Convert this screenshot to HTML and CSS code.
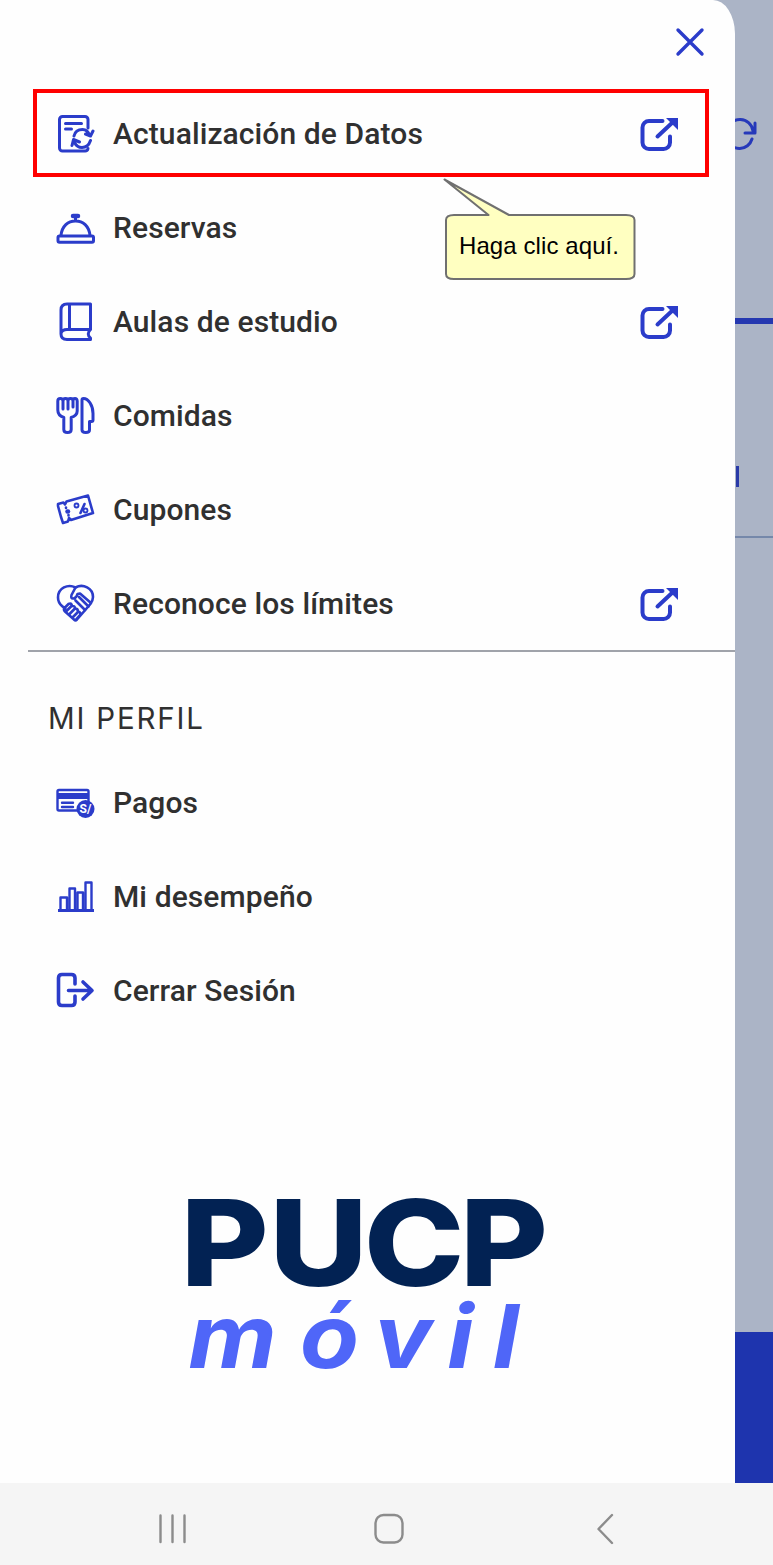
FILE: index.html
```html
<!DOCTYPE html>
<html lang="es">

<head>
    <meta charset="UTF-8">
    <meta name="viewport" content="width=device-width, initial-scale=1.0">
    <title>PUCP Móvil</title>
    <link rel="stylesheet" href="styles.css">
</head>

<body>
    <!-- Shared icon, used by the items that open an external site -->
    <svg class="sprite" aria-hidden="true">
        <symbol id="external" viewBox="0 0 40 40">
            <path d="M23.500 7H10a6.500 6.500 0 0 0-6.500 6.500v15a6.500 6.500 0 0 0 6.500 6.500h14.500a6.500 6.500 0 0 0 6.500-6.500V22.500M18.500 22.500L34 8" />
            <path class="solid" d="M27 4h12v12z" />
        </symbol>
    </svg>

    <div class="screen">
        <aside class="drawer">
            <header class="drawer-header">
                <svg class="close" viewBox="0 0 30 30"><path d="M3 3L27 27M27 3L3 27" /></svg>
            </header>

            <nav class="menu">
                <a class="menu-item highlighted">
                    <svg class="icon" viewBox="0 0 40 40">
                        <path d="M33 14V5.500a3 3 0 0 0-3-3H7.500a3 3 0 0 0-3 3v28.500a3 3 0 0 0 3 3h22.500a3 3 0 0 0 3-2.500M10.500 9.500h16M10.500 15h6" />
                        <path d="M19 22c1-4.500 4.500-6.500 8.500-6.500s6 2.500 7 6M30.500 20l5 2 2.500-5M35.500 26.500c-1.500 4.500-4.500 7-8.500 7-3.500 0-6-2-7.500-5M17 31.500l1.500-6 6 2.500" />
                    </svg>
                    <span class="label">Actualización de Datos</span>
                    <svg class="external"><use href="#external" /></svg>
                </a>
                <a class="menu-item">
                    <svg class="icon" viewBox="0 0 40 40">
                        <rect x="3" y="28" width="35.500" height="6.300" rx="1.500" />
                        <path d="M6 27.500C7 18 13 13 20.500 13S34 18 35 27.500M20.500 8v4" />
                        <path class="heavy" d="M18 8h5" />
                    </svg>
                    <span class="label">Reservas</span>
                </a>
                <a class="menu-item">
                    <svg class="icon" viewBox="0 0 40 40">
                        <path d="M35.500 27.500V2H12Q6 2 6 8v24q0 5.500 6 5.500h23.500v-1.500q-4.500-4 0-8.500H12q-5 0-6 4M14.500 2v25.500" />
                    </svg>
                    <span class="label">Aulas de estudio</span>
                    <svg class="external"><use href="#external" /></svg>
                </a>
                <a class="menu-item">
                    <svg class="icon" viewBox="0 0 40 40">
                        <path d="M2.800 14V5q0-2.500 2.500-2.500T8 5q0-2.500 2.500-2.500T13 5q0-2.500 2.500-2.500T18 5q0-2.500 2-2.500T22.200 5v10q0 4.500-6 6.500v12q0 3-3.700 3t-3.700-3v-12q-6-2-6-7.500zM8 5v8M13 5v8M18 5v6" />
                        <path d="M27 34V4q0-1.500 1.500-1.500c5 0 9.500 7 9.500 15V24q0 1.500-1.500 1.500h-2V34q0 2.500-3.700 2.500T27 34z" />
                    </svg>
                    <span class="label">Comidas</span>
                </a>
                <a class="menu-item">
                    <svg class="icon ticket" viewBox="0 0 40 40">
                        <path d="M3 14l5.500-1.500 1.500 2 1.500-3L33 5.500l5 17.500-22 7-2-2-1 3.500-5 1.500-2-6-3-11z" />
                        <path d="M11 17.500v.5M13.500 25v.5M29.500 14L25.500 23" />
                        <path class="heavy" d="M12.500 21.500h.5" />
                        <circle class="dot" cx="21.500" cy="15.500" r="2" />
                        <circle class="dot" cx="30.500" cy="20.500" r="2" />
                    </svg>
                    <span class="label">Cupones</span>
                </a>
                <a class="menu-item">
                    <svg class="icon ticket" viewBox="0 0 40 40">
                        <path d="M20.500 3.500C13-.5 3 4 3 13.500q0 5 4 8.500l3.500 3M20.500 3.500C28-.5 38 4 38 13q0 4-3 7.500L22 35.500q-1.500 1.500-3 0L10 27.500q-2-2 0-4l3.500-3.500q3-1.500 3.500 2 3-.5 3 2.500 3 0 3 3 3 .5 2 3.500l-4 4.500" />
                        <path d="M20.500 3.500l-4 7.500q-1 4 2 3.500 3-.5 4-4.500l2.500-.500L36 19M11.500 27l5-5M14.500 30l5-5M18 33l5-5M24 13l9.500 9.500M20.500 16.500l9.500 9.500" />
                    </svg>
                    <span class="label">Reconoce los límites</span>
                    <svg class="external"><use href="#external" /></svg>
                </a>
            </nav>

            <h2 class="section-title">MI PERFIL</h2>

            <nav class="menu">
                <a class="menu-item">
                    <svg class="icon" viewBox="0 0 40 40">
                        <rect class="thin" x="2.500" y="7" width="31" height="20.500" rx="1.500" />
                        <path class="solid" d="M2 10h32v6H2z" />
                        <path class="thin" d="M7 19.800h11M7 24h11" />
                        <circle class="coin" cx="30.500" cy="26" r="9" />
                        <text class="coin-text" x="30.500" y="30">S/</text>
                    </svg>
                    <span class="label">Pagos</span>
                </a>
                <a class="menu-item">
                    <svg class="icon thin" viewBox="0 0 40 40">
                        <path d="M5.500 33V20.500H12V33M14.500 33V11.500H20V33M22.500 33V15.500H28V33M30.500 33V5.500h6V33" />
                        <path class="axis" d="M3 33.500h36" />
                    </svg>
                    <span class="label">Mi desempeño</span>
                </a>
                <a class="menu-item">
                    <svg class="icon logout" viewBox="0 0 40 40">
                        <path d="M20 13V7q0-3.500-3.500-3.500H7Q3.500 3.500 3.500 7v24q0 3.500 3.500 3.500h9.500q3.500 0 3.500-3.500v-6M13.500 19.500H36M28 11l9 8.500-9 8.500" />
                    </svg>
                    <span class="label">Cerrar Sesión</span>
                </a>
            </nav>

            <svg class="logo" viewBox="0 0 400 200">
                <text class="logo-pucp" transform="scale(1.13 1)" y="106" x="9.400 87.800 171.500 256.500">PUCP</text>
                <text class="logo-movil" transform="scale(1.1 1)" y="188" x="16.500 118 185.500 252 293.500">móvil</text>
            </svg>
        </aside>

        <div class="backdrop">
            <svg class="refresh" viewBox="0 0 38 40">
                <path d="M-8 15A13.200 13.200 0 0 1 18 16M20 8v10H10M17 24A13.200 13.200 0 0 1-8 25" />
            </svg>
            <div class="tab-line"></div>
            <div class="tab-text"></div>
            <div class="divider"></div>
            <div class="bottom-bar"></div>
        </div>

        <footer class="system-nav">
            <svg viewBox="0 0 40 40"><path d="M4.500 6.500v26.500M16.500 6.500v26.500M28.500 6.500v26.500" /></svg>
            <svg viewBox="0 0 40 40"><rect x="6.500" y="6" width="27" height="27.500" rx="8" /></svg>
            <svg viewBox="0 0 40 40"><path d="M30 6L16.500 20L30 34" /></svg>
        </footer>

        <svg class="callout" viewBox="0 0 194 104">
            <path d="M1.500 2.500L45.500 38H11Q3 38 3 43V97Q3 102 11 102H183Q191.500 102 191.500 97V43Q191.500 38 183 38H66Z" />
            <text x="16" y="77" textLength="160">Haga clic aquí.</text>
        </svg>
    </div>
</body>

</html>
```
FILE: styles.css
```css
body {
    margin: 0;
    font-family: Roboto, sans-serif;
    color: #303030;
}

.sprite {
    display: none;
}

svg {
    fill: none;
    stroke: #2b3cca;
    stroke-width: 3.4;
    stroke-linecap: round;
    stroke-linejoin: round;
}

.screen {
    position: relative;
    display: grid;
    grid-template-columns: 735px 38px;
    grid-template-rows: 1483px 82px;
    width: 773px;
    background: #abb4c6;
}

/* Side drawer */
.drawer {
    display: flex;
    flex-direction: column;
    background: #fefefe;
    border-radius: 0 22px 0 0 / 0 34px 0 0;
}

.drawer-header {
    display: flex;
    justify-content: flex-end;
    height: 60px;
    padding: 27px 30px 0 0;
    box-sizing: border-box;
    margin-bottom: 27px;
}

.close {
    width: 30px;
    height: 30px;
}

/* Menu */
.menu {
    display: flex;
    flex-direction: column;
}

.menu-item {
    position: relative;
    display: flex;
    align-items: center;
    height: 94px;
    padding: 0 56px 0 55px;
    box-sizing: border-box;
}

.icon {
    width: 40px;
    height: 40px;
    margin-right: 18px;
    stroke-width: 3;
}

.label {
    flex: 1;
    padding-bottom: 2px;
    font-size: 30px;
    font-weight: 500;
    letter-spacing: 0.1px;
    white-space: nowrap;
}

.external {
    width: 40px;
    height: 40px;
    stroke-width: 4;
}

.solid {
    fill: #2b3cca;
    stroke: none;
}

.thin {
    stroke-width: 2.4;
}

.ticket {
    stroke-width: 2.6;
}

.dot {
    stroke-width: 1.8;
}

.heavy {
    stroke-width: 4.5;
}

.axis {
    stroke-width: 3;
    stroke-linecap: butt;
}

.logout {
    stroke-width: 3.6;
}

.coin {
    fill: #2b3cca;
    stroke: none;
}

.coin-text {
    fill: #fff;
    stroke: none;
    font-size: 12px;
    font-weight: 700;
    text-anchor: middle;
}

/* Red frame around the item to click */
.highlighted::after {
    content: "";
    position: absolute;
    top: 2px;
    left: 33px;
    right: 26px;
    height: 80px;
    border: 4px solid #ff0000;
}

.section-title {
    height: 106px;
    margin: -1px 0 0 28px;
    padding: 48px 0 0 20px;
    box-sizing: border-box;
    border-top: 2px solid #a0a3aa;
    font-family: Inter, sans-serif;
    font-size: 29.5px;
    line-height: 36px;
    font-weight: 400;
    letter-spacing: 1.8px;
}

/* Logo */
.logo {
    width: 400px;
    height: 200px;
    margin: 142px 0 0 170px;
    stroke: none;
}

.logo-pucp {
    fill: #022253;
    font: 800 120px Inter, sans-serif;
}

.logo-movil {
    fill: #4f66f8;
    font: italic 700 88px Inter, sans-serif;
}

/* Page behind the drawer */
.backdrop {
    display: flex;
    flex-direction: column;
}

.refresh {
    width: 38px;
    height: 40px;
    margin-top: 115px;
    stroke: #2639ba;
    stroke-width: 3;
}

.tab-line {
    height: 6px;
    margin-top: 163px;
    background: #2538b0;
}

.tab-text {
    width: 3px;
    height: 21px;
    margin: 142px 0 0 1px;
    background: #2a3ba8;
}

.divider {
    height: 2px;
    margin-top: 49px;
    background: #7588aa;
}

.bottom-bar {
    height: 151px;
    margin-top: auto;
    background: #1e34ae;
}

/* System navigation bar */
.system-nav {
    grid-column: 1 / 3;
    display: flex;
    align-items: center;
    gap: 173px;
    padding: 10px 0 0 156px;
    box-sizing: border-box;
    background: #f5f5f5;
}

.system-nav svg {
    width: 40px;
    height: 40px;
    stroke: #8c8c8c;
    stroke-width: 2.4;
}

/* Tooltip */
.callout {
    position: absolute;
    top: 177px;
    left: 443px;
    width: 194px;
    height: 104px;
}

.callout path {
    fill: #ffffc1;
    stroke: #707070;
    stroke-width: 2;
}

.callout text {
    fill: #000;
    stroke: none;
    font: 24px "Liberation Sans", Arial, sans-serif;
}
```
